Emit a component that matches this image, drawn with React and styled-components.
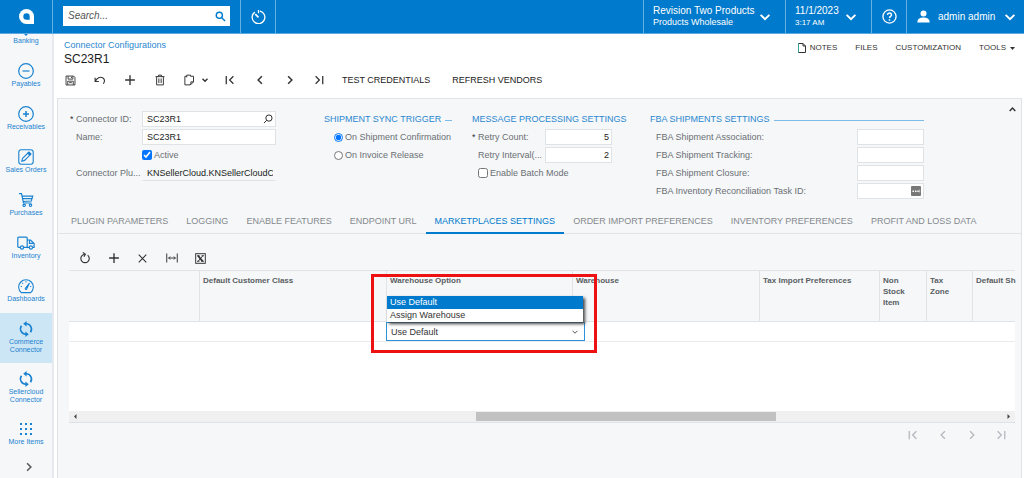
import React from "react";
import styled, { createGlobalStyle, css } from "styled-components";

const blue = "#007acc";
const panel = "#f5f7f9";
const line = "#e1e4e7";

const GlobalStyle = createGlobalStyle`
  *, *::before, *::after { box-sizing: border-box; }
  body { margin: 0; background: #fff; color: #333; font: 9px/12px "Liberation Sans", Arial, sans-serif; }
  button, input, select { font: inherit; color: inherit; margin: 0; }
  button { background: none; border: 0; padding: 0; cursor: pointer; }
  a { color: inherit; text-decoration: none; }
  svg { display: block; flex: none; }
  ul { list-style: none; margin: 0; padding: 0; }
`;

const Page = styled.div`
  min-height: 100vh;
  display: flex;
  flex-direction: column;
`;

/* ---------- top bar ---------- */
const TopBar = styled.header`
  display: flex;
  height: 34px;
  background: ${blue};
  border-bottom: 1px solid #5aa9e0;
  color: #fff;
`;
const LogoLink = styled.a`
  width: 53px;
  border-right: 1px solid #66b0e3;
  display: flex;
  align-items: center;
  justify-content: center;
`;
const SearchBox = styled.form`
  display: flex;
  align-items: center;
  width: 167px;
  height: 20px;
  margin: 6px 10px;
  padding: 0 4px 0 5px;
  background: #fff;
  color: ${blue};
`;
const SearchInput = styled.input`
  flex: 1;
  min-width: 0;
  border: 0;
  padding: 0;
  outline: 0;
  background: transparent;
  font-size: 10px;
  font-style: italic;
  color: #444;
  &::placeholder { color: #555; opacity: 1; }
`;
const BarButton = styled.button`
  display: flex;
  align-items: center;
  justify-content: ${(p) => (p.$spread ? "space-between" : "center")};
  width: ${(p) => p.$w}px;
  padding: ${(p) => (p.$spread ? "0 13px 0 9px" : "0")};
  border-left: 1px solid #66b0e3;
  border-right: ${(p) => (p.$closed ? "1px solid #66b0e3" : "0")};
  font-size: 10px;
  text-align: left;
  white-space: nowrap;
`;
const UserButton = styled(BarButton)`
  padding: 0 7px 0 10px;
  gap: 8px;
  justify-content: flex-start;
  svg:last-child { margin-left: auto; }
`;
const Grow = styled.span`
  flex: 1;
`;
const TwoLines = styled.span`
  display: flex;
  flex-direction: column;
  line-height: 12px;
  small { font-size: ${(p) => (p.$small ? 8 : 9)}px; line-height: 11px; }
`;

/* ---------- side navigation ---------- */
const Body = styled.div`
  flex: 1;
  display: flex;
`;
const SideNav = styled.nav`
  flex: none;
  width: 54px;
  display: flex;
  flex-direction: column;
  background: ${panel};
  border-right: 2px solid #e6e9ed;
  overflow: hidden;
  color: #1a82d0;
`;
const NavList = styled.ul`
  margin-top: -22px;
  flex: 1;
`;
const NavItem = styled.a`
  display: flex;
  flex-direction: column;
  align-items: center;
  gap: 1px;
  min-height: 43px;
  padding: 8px 0 9px;
  background: ${(p) => (p.$active ? "#cde6f5" : "transparent")};
  font-size: 7px;
  line-height: 8px;
  text-align: center;
`;
const NavLabel = styled.span`
  max-width: 48px;
`;
const NavMore = styled.button`
  height: 22px;
  display: flex;
  align-items: center;
  justify-content: center;
  padding-left: 6px;
  color: #555;
`;

/* ---------- page head ---------- */
const Main = styled.main`
  flex: 1;
  min-width: 0;
  display: flex;
  flex-direction: column;
  padding: 0 2px 0 3px;
`;
const Head = styled.div`
  display: flex;
  justify-content: space-between;
  padding: 6px 7px 0;
`;
const Crumb = styled.a`
  display: block;
  line-height: 10px;
  color: #2b87cf;
`;
const Title = styled.h1`
  margin: 1px 0 0;
  font-size: 12px;
  font-weight: 400;
  line-height: 16px;
  color: #1c1c1c;
`;
const HeadLinks = styled.div`
  display: flex;
  align-items: center;
  gap: 18px;
  height: 16px;
  font-size: 8px;
`;
const HeadButton = styled.button`
  display: flex;
  align-items: center;
  gap: 4px;
`;
const Toolbar = styled.div`
  display: flex;
  height: 26px;
  margin: 0 0 5px -2px;
`;
const IconButton = styled.button`
  width: ${(p) => p.$w || 30}px;
  display: flex;
  align-items: center;
  justify-content: center;
  gap: 6px;
  color: ${(p) => (p.$dim ? "#b4b8bc" : "#333")};
`;
const CopyButton = styled(IconButton)`
  padding-left: 1px;
`;
const TextButtons = styled.div`
  display: flex;
  gap: 22px;
  padding-left: 9px;
`;
const TextButton = styled.button`
  color: #222;
`;

/* ---------- panel ---------- */
const Panel = styled.section`
  flex: 1;
  display: flex;
  flex-direction: column;
  background: ${panel};
  border: 1px solid ${line};
  border-bottom: 0;
`;
const FormArea = styled.div`
  display: flex;
  align-items: flex-start;
`;
const Columns = styled.form`
  flex: 1;
  display: grid;
  grid-template-columns: 254px 148px 178px 274px;
  padding: 12px 0 10px 12px;
`;
const Collapse = styled.button`
  width: 18px;
  height: 20px;
  display: flex;
  align-items: center;
  justify-content: center;
`;
const Column = styled.div`
  display: flex;
  flex-direction: column;
  gap: 2px;
  color: #6b6f73;
  white-space: nowrap;
`;
const Heading = styled.h2`
  display: flex;
  align-items: center;
  gap: 4px;
  width: ${(p) => (p.$w ? `${p.$w}px` : "auto")};
  height: 16px;
  margin: 0;
  font-size: 9px;
  font-weight: 400;
  color: #2b87cf;
  ${(p) =>
    p.$rule &&
    css`
      &::after { content: ""; flex: 1; height: 1px; margin-top: 2px; background: #7dbbe8; }
    `}
`;
const FieldRow = styled.div`
  display: flex;
  align-items: center;
  height: 16px;
`;
const Mark = styled.span`
  width: 6px;
  color: #333;
`;
const FieldLabel = styled.label`
  width: ${(p) => p.$w}px;
`;
const InputBox = styled.span`
  display: flex;
  align-items: center;
  width: ${(p) => p.$w}px;
  height: 16px;
  padding: 0 2px 0 4px;
  border: 1px solid #dfe3e6;
  background: #fff;
  color: #222;
  ${(p) =>
    p.$flat &&
    css`
      background: transparent;
      border-color: transparent transparent #dfe3e6;
    `}
`;
const Field = styled.input`
  flex: 1;
  width: 100%;
  min-width: 0;
  padding: 0;
  border: 0;
  outline: 0;
  background: transparent;
  text-align: ${(p) => (p.$right ? "right" : "left")};
`;
const Choice = styled.label`
  display: flex;
  align-items: center;
  gap: 2px;
  height: 16px;
  padding-left: ${(p) => p.$indent}px;
  input { width: ${(p) => (p.$radio ? 9 : 10)}px; height: ${(p) => (p.$radio ? 9 : 10)}px; }
`;

/* ---------- tabs ---------- */
const Tabs = styled.div`
  display: flex;
  height: 25px;
  padding-left: 4px;
  border-bottom: 1px solid ${line};
`;
const Tab = styled.button`
  height: 25px;
  padding: 0 9px;
  white-space: nowrap;
  color: ${(p) => (p.$active ? blue : "#85898d")};
  border-bottom: 2px solid ${(p) => (p.$active ? blue : "transparent")};
`;
const GridTools = styled.div`
  display: flex;
  height: 24px;
  margin: 12px 0 0 12px;
`;

/* ---------- grid ---------- */
const GridBox = styled.div`
  flex: 1;
  display: flex;
  flex-direction: column;
  margin: 0 6px 0 11px;
  background: #fff;
  border-bottom: 1px solid #dfe2e5;
`;
const GridBody = styled.div`
  flex: 1;
`;
const Table = styled.table`
  width: 100%;
  table-layout: fixed;
  border-collapse: separate;
  border-spacing: 0;
`;
const Th = styled.th`
  height: 52px;
  padding: 4px 0 4px 3px;
  vertical-align: top;
  text-align: left;
  font-size: 8px;
  line-height: 11px;
  color: #5a5e62;
  background: ${panel};
  border-top: 1px solid ${line};
  border-bottom: 1px solid ${line};
  border-right: ${(p) => (p.$last ? "0" : `1px solid ${line}`)};
  white-space: pre;
`;
const Td = styled.td`
  height: 20px;
  padding: 0;
  border-bottom: 1px solid #e9ebed;
`;
const Editor = styled.div`
  position: relative;
  height: 19px;
  width: 199px;
  margin-left: -1px;
  display: flex;
  align-items: center;
  svg { position: absolute; right: 6px; pointer-events: none; color: #555; }
`;
const EditorSelect = styled.select`
  appearance: none;
  width: 100%;
  height: 100%;
  padding: 0 4px;
  border: 1px solid #2f91d8;
  border-radius: 0;
  outline: 0;
  background: #fff;
  color: #333;
`;
const Options = styled.ul`
  position: absolute;
  z-index: 2;
  left: 1px;
  bottom: 19px;
  width: 196px;
  background: #fff;
  box-shadow: 2px 2px 3px #444;
`;
const Option = styled.li`
  height: 13px;
  padding: 0 3px;
  line-height: 13px;
  background: ${(p) => (p.$active ? blue : "#fff")};
  color: ${(p) => (p.$active ? "#fff" : "#333")};
`;
const Highlight = styled.span`
  position: absolute;
  z-index: 3;
  left: -15px;
  top: -48px;
  width: 226px;
  height: 79px;
  border: 3px solid #ee1111;
  pointer-events: none;
`;
const ScrollTrack = styled.div`
  display: flex;
  align-items: center;
  height: 11px;
  padding: 0 4px;
  background: #f0f0f0;
  color: #444;
`;
const Space = styled.span`
  flex: ${(p) => p.$n} 1 0;
`;
const Thumb = styled.span`
  flex: 300 1 0;
  height: 9px;
  background: #c1c1c1;
`;
const Pager = styled.div`
  display: flex;
  justify-content: flex-end;
  height: 24px;
  margin: 0 6px 31px;
`;

/* ---------- icons ---------- */
const Svg = ({ s = 12, w = s, box = "0 0 16 16", sw = 1.3, children }) => (
  <svg width={w} height={s} viewBox={box} fill="none" stroke="currentColor" strokeWidth={sw} aria-hidden="true">
    {children}
  </svg>
);
const Chevron = ({ dir = "down", s = 14, sw = 2.2 }) => {
  const d = { down: "M3 5.5l5 5 5-5", up: "M3 10.5l5-5 5 5", left: "M10.5 3l-5 5 5 5", right: "M5.5 3l5 5-5 5" }[dir];
  return <Svg s={s} sw={sw}><path d={d} /></Svg>;
};
const First = () => <Svg s={12} sw={1.7}><path d="M3 2.5v11M12.5 3l-5 5 5 5" /></Svg>;
const Last = () => <Svg s={12} sw={1.7}><path d="M13 2.5v11M3.5 3l5 5-5 5" /></Svg>;
const Plus = () => <Svg s={12} sw={1.8}><path d="M8 1.5v13M1.5 8h13" /></Svg>;
const Triangle = ({ d, s = 5 }) => <svg width={s} height={s} viewBox="0 0 10 10" fill="currentColor" aria-hidden="true"><path d={d} /></svg>;

const Sync = () => (
  <Svg s={16} sw={1.6}>
    <path d="M8 2.700A5.400 5.400 0 0 1 12.500 11.200" />
    <path d="M8 13.300A5.400 5.400 0 0 1 3.500 4.800" />
    <path d="M8.600 0L5.200 2.700l3.400 2.700zM7.400 16l3.400-2.700-3.400-2.700z" fill="currentColor" stroke="none" />
  </Svg>
);
const navIcons = {
  bank: <Svg s={16}><path d="M2 10h12l-6 6z" fill="currentColor" stroke="none" /></Svg>,
  minus: <Svg s={16} sw={1.2}><circle cx="8" cy="8" r="7.300" /><path d="M4.500 8h7" /></Svg>,
  plus: <Svg s={16} sw={1.2}><circle cx="8" cy="8" r="7.300" /><path d="M5 8h6M8 5v6" strokeWidth="1.500" /></Svg>,
  pencil: (
    <Svg s={16} sw={1.1}>
      <rect x=".8" y=".8" width="14.400" height="14.400" rx="2.500" />
      <path d="M3.800 12.200l.8-2.800 5.800-5.800 2 2-5.800 5.800z" />
      <path d="M9.700 4.300l1.300-1.300 2 2-1.300 1.300z" fill="currentColor" />
    </Svg>
  ),
  cart: (
    <Svg s={16} sw={1.2}>
      <path d="M1 1.700h2.500l2 9.300h8M4 4.200h10.700L13.300 9 5.200 9.500M4.600 6.700h9" />
      <circle cx="6.200" cy="13.300" r="1.200" /><circle cx="12.500" cy="13.300" r="1.200" />
    </Svg>
  ),
  truck: (
    <Svg s={16} w={18} box="0 0 18 16" sw={1.2}>
      <path d="M3.300 12.300H1.600q-.8 0-.8-.8V3q0-.9.9-.9h7.600q.9 0 .9.900v9.300H6.600M10.200 5h3.300l3.600 3.500v3.800h-1.500M12.200 12.300h-2" />
      <path d="M12.500 5v3.300h4" />
      <circle cx="5" cy="12.500" r="1.600" /><circle cx="13.900" cy="12.500" r="1.600" />
    </Svg>
  ),
  gauge: (
    <Svg s={16} sw={1.1}>
      <path d="M3.300 14.600a7.300 7.300 0 1 1 9.400 0z" />
      <path d="M7.200 10.500l4.300-5.500-3 6.300q-1 .7-1.300-.8z" />
      <path d="M8 3.300v1.200M4.300 4.800l.8.8M2.800 8.500H4M13.200 8.500H12" />
    </Svg>
  ),
  sync: <Sync />,
  dots: (
    <Svg s={16}>
      <g fill="currentColor" stroke="none">
        {[2, 7, 12].map((y) => [2, 7, 12].map((x) => <rect key={`${x}-${y}`} x={x} y={y} width="2" height="2" />))}
      </g>
    </Svg>
  ),
};

const nav = [
  ["Banking", "bank"],
  ["Payables", "minus"],
  ["Receivables", "plus"],
  ["Sales Orders", "pencil"],
  ["Purchases", "cart"],
  ["Inventory", "truck"],
  ["Dashboards", "gauge"],
  ["Commerce Connector", "sync", true],
  ["Sellercloud Connector", "sync"],
  ["More Items", "dots"],
];

const tabs = [
  "PLUGIN PARAMETERS",
  "LOGGING",
  "ENABLE FEATURES",
  "ENDPOINT URL",
  "MARKETPLACES SETTINGS",
  "ORDER IMPORT PREFERENCES",
  "INVENTORY PREFERENCES",
  "PROFIT AND LOSS DATA",
];

const columns = [
  ["", 131],
  ["Default Customer Class", 187],
  ["Warehouse Option", 186],
  ["Warehouse", 187],
  ["Tax Import Preferences", 120],
  ["Non\nStock\nItem", 47],
  ["Tax\nZone", 46],
  ["Default Sh", null],
];

function TextField({ id, label, mark, labelWidth, width, value, right, flat, icon }) {
  return (
    <FieldRow>
      <Mark>{mark ? "*" : ""}</Mark>
      <FieldLabel htmlFor={id} $w={labelWidth}>{label}</FieldLabel>
      <InputBox $w={width} $flat={flat}>
        <Field id={id} defaultValue={value} $right={right} />
        {icon}
      </InputBox>
    </FieldRow>
  );
}

function Header() {
  return (
    <TopBar>
      <LogoLink href="#home" aria-label="Home">
        <svg width="15" height="15" viewBox="0 0 15 15" aria-hidden="true">
          <path d="M7.500 0A7.500 7.500 0 0 1 15 7.500V15H7.500a7.500 7.500 0 0 1 0-15z" fill="#fff" />
          <path d="M7.500 4.300A3.200 3.200 0 0 1 10.700 7.500v3.200H7.500a3.200 3.200 0 0 1 0-6.400z" fill={blue} />
        </svg>
      </LogoLink>
      <SearchBox>
        <SearchInput aria-label="Search" placeholder="Search..." />
        <button type="button" aria-label="Run search">
          <Svg s={11} sw={2}><circle cx="6.300" cy="6.300" r="4.500" /><path d="M9.700 9.700l5 5" /></Svg>
        </button>
      </SearchBox>
      <BarButton $w={36} $closed aria-label="History">
        <Svg s={15} sw={1.4}>
          <path d="M4 3.300A6.800 6.800 0 1 0 9.500 2.200" />
          <path d="M4.500 5.500L8 9" strokeWidth="1.700" /><path d="M8 1v3.500" />
        </Svg>
      </BarButton>
      <Grow />
      <BarButton $w={142} $spread>
        <TwoLines><span>Revision Two Products</span><small>Products Wholesale</small></TwoLines>
        <Chevron />
      </BarButton>
      <BarButton $w={86} $spread>
        <TwoLines $small><span>11/1/2023</span><small>3:17 AM</small></TwoLines>
        <Chevron />
      </BarButton>
      <BarButton $w={35} aria-label="Help">
        <Svg s={15} sw={1.4}>
          <circle cx="8" cy="8" r="7" />
          <path d="M5.800 6.300Q6 4.300 8 4.300t2.200 1.900Q10.200 7.200 9 8 8 8.600 8 9.700M8 11v1.500" strokeWidth="1.600" />
        </Svg>
      </BarButton>
      <UserButton $w={118}>
        <svg width="13" height="13" viewBox="0 0 13 13" fill="#fff" aria-hidden="true">
          <circle cx="6.500" cy="3.500" r="3" /><path d="M.3 12.500q0-5 6.200-5t6.200 5z" />
        </svg>
        <span>admin admin</span>
        <Chevron />
      </UserButton>
    </TopBar>
  );
}

function Sidebar() {
  return (
    <SideNav>
      <NavList>
        {nav.map(([label, icon, active]) => (
          <li key={label}>
            <NavItem href="#nav" $active={active}>
              {navIcons[icon]}
              <NavLabel>{label}</NavLabel>
            </NavItem>
          </li>
        ))}
      </NavList>
      <NavMore aria-label="Expand menu"><Chevron dir="right" s={12} sw={2} /></NavMore>
    </SideNav>
  );
}

function PageHead() {
  return (
    <>
      <Head>
        <div>
          <Crumb href="#configurations">Connector Configurations</Crumb>
          <Title>SC23R1</Title>
        </div>
        <HeadLinks>
          <HeadButton>
            <Svg s={10} w={8} box="0 0 8 10" sw={1}>
              <path d="M.5.5h4.500l2.500 2.500v6.500h-7z" /><path d="M5 .5V3h2.500" />
              <path d="M.5.5v9" stroke="#35a79c" />
            </Svg>
            NOTES
          </HeadButton>
          <HeadButton>FILES</HeadButton>
          <HeadButton>CUSTOMIZATION</HeadButton>
          <HeadButton>TOOLS <Triangle d="M0 2h10L5 8z" /></HeadButton>
        </HeadLinks>
      </Head>
      <Toolbar>
        <IconButton aria-label="Save">
          <Svg s={11} sw={1.3}>
            <path d="M1.500 1.500h11l2 2v11h-13z" /><path d="M4.500 1.500v4.500h7V1.500M4 14.500V9h8v5.500M6 11.200h4M9.500 2.500v2" />
          </Svg>
        </IconButton>
        <IconButton aria-label="Undo">
          <Svg s={12} sw={1.5}><path d="M1.500 5v5h5M1.800 9.700C4 5 8 3.200 11.500 5c3 1.700 3.300 5 .8 8" /></Svg>
        </IconButton>
        <IconButton aria-label="Add"><Plus /></IconButton>
        <IconButton aria-label="Delete">
          <Svg s={12} sw={1.3}><path d="M2 3.500h12M6 3.500v-2h4v2M3.500 3.500v11h9v-11M6.500 6v6M9.500 6v6" /></Svg>
        </IconButton>
        <CopyButton $w={40} aria-label="Copy">
          <Svg s={12} sw={1.3}>
            <path d="M5 3H2.500v11.500h7" /><path d="M5 4.500V1.500h5V3h4v7.500l-3.500 3.500H9M10.500 14v-3.500H14" />
          </Svg>
          <Chevron s={8} sw={2.8} />
        </CopyButton>
        <IconButton aria-label="First record"><First /></IconButton>
        <IconButton aria-label="Previous record"><Chevron dir="left" s={12} sw={2} /></IconButton>
        <IconButton $w={29} aria-label="Next record"><Chevron dir="right" s={12} sw={2} /></IconButton>
        <IconButton $w={29} aria-label="Last record"><Last /></IconButton>
        <TextButtons>
          <TextButton>TEST CREDENTIALS</TextButton>
          <TextButton>REFRESH VENDORS</TextButton>
        </TextButtons>
      </Toolbar>
    </>
  );
}

function SettingsForm() {
  return (
    <FormArea>
      <Columns>
        <Column>
          <TextField
            id="cid" mark label="Connector ID:" labelWidth={66} width={134} value="SC23R1"
            icon={<Svg s={10} sw={1.5}><circle cx="9.500" cy="6.500" r="5" /><path d="M6 10l-4.500 4.500" /></Svg>}
          />
          <TextField id="name" label="Name:" labelWidth={66} width={134} value="SC23R1" />
          <Choice $indent={72}><input type="checkbox" defaultChecked />Active</Choice>
          <TextField id="plugin" flat label="Connector Plu..." labelWidth={66} width={134} value="KNSellerCloud.KNSellerCloudConnector" />
        </Column>
        <Column>
          <Heading $rule $w={128}>SHIPMENT SYNC TRIGGER</Heading>
          <Choice $radio $indent={10}><input type="radio" name="trigger" defaultChecked />On Shipment Confirmation</Choice>
          <Choice $radio $indent={10}><input type="radio" name="trigger" />On Invoice Release</Choice>
        </Column>
        <Column>
          <Heading>MESSAGE PROCESSING SETTINGS</Heading>
          <TextField id="count" mark right label="Retry Count:" labelWidth={67} width={67} value="5" />
          <TextField id="interval" right label="Retry Interval(..." labelWidth={67} width={67} value="2" />
          <Choice $indent={6}><input type="checkbox" />Enable Batch Mode</Choice>
        </Column>
        <Column>
          <Heading $rule>FBA SHIPMENTS SETTINGS</Heading>
          <TextField id="assoc" label="FBA Shipment Association:" labelWidth={201} width={67} />
          <TextField id="track" label="FBA Shipment Tracking:" labelWidth={201} width={67} />
          <TextField id="closure" label="FBA Shipment Closure:" labelWidth={201} width={67} />
          <TextField
            id="task" label="FBA Inventory Reconciliation Task ID:" labelWidth={201} width={67}
            icon={
              <svg width="10" height="10" viewBox="0 0 10 10" aria-hidden="true">
                <rect width="10" height="10" rx="1" fill="#777" />
                <path d="M1.500 4.500h1.500v1.500H1.500zM4 4.500h1.500v1.500H4zM6.300 4.500h1.500v1.500H6.300zM8.500 3.500h.6v3h-.6z" fill="#fff" />
              </svg>
            }
          />
        </Column>
      </Columns>
      <Collapse aria-label="Collapse"><Chevron dir="up" s={9} sw={2.6} /></Collapse>
    </FormArea>
  );
}

function Marketplaces() {
  return (
    <>
      <GridTools>
        <IconButton $w={29} aria-label="Refresh">
          <Svg s={12} sw={1.5}>
            <path d="M11.500 4.200A5.600 5.600 0 1 1 4.600 4.200L7.500 3" />
            <path d="M5 .8l3.500 2-1.800 3.600" />
          </Svg>
        </IconButton>
        <IconButton $w={29} aria-label="Add row"><Plus /></IconButton>
        <IconButton $w={29} aria-label="Delete row"><Svg s={11} sw={1.6}><path d="M2.500 2.500l11 11M13.500 2.500l-11 11" /></Svg></IconButton>
        <IconButton $w={29} aria-label="Fit to screen">
          <Svg s={12} sw={1.3}>
            <path d="M1 2v12M15 2v12M3.500 8h9M5.500 6l-2 2 2 2M10.500 6l2 2-2 2" />
          </Svg>
        </IconButton>
        <IconButton $w={29} aria-label="Export to Excel">
          <Svg s={11} sw={1.4}>
            <rect x="1" y="1" width="14" height="14" /><path d="M4.500 4l6.500 8" strokeWidth="2.800" /><path d="M11.500 4l-7 8M3 4h3.500M9.500 4H13M3 12h3.500M9 12h4" />
          </Svg>
        </IconButton>
      </GridTools>
      <GridBox>
        <GridBody>
          <Table>
            <colgroup>
              {columns.map(([name, width]) => <col key={name} width={width || undefined} />)}
            </colgroup>
            <thead>
              <tr>{columns.map(([name], i) => <Th key={name} $last={i === columns.length - 1}>{name}</Th>)}</tr>
            </thead>
            <tbody>
              <tr>
                {columns.map(([name]) => (
                  <Td key={name}>
                    {name === "Warehouse Option" && (
                      <Editor>
                        <EditorSelect aria-label="Warehouse Option" defaultValue="Use Default">
                          <option>Use Default</option>
                          <option>Assign Warehouse</option>
                        </EditorSelect>
                        <Chevron s={8} sw={2} />
                        <Options role="listbox" aria-label="Warehouse options">
                          <Option role="option" aria-selected="true" $active>Use Default</Option>
                          <Option role="option" aria-selected="false">Assign Warehouse</Option>
                        </Options>
                        <Highlight />
                      </Editor>
                    )}
                  </Td>
                ))}
              </tr>
            </tbody>
          </Table>
        </GridBody>
        <ScrollTrack>
          <Triangle d="M7 0v10L2 5z" />
          <Space $n={398} /><Thumb /><Space $n={230} />
          <Triangle d="M3 0v10l5-5z" />
        </ScrollTrack>
      </GridBox>
      <Pager>
        <IconButton $dim aria-label="First page"><First /></IconButton>
        <IconButton $dim $w={29} aria-label="Previous page"><Chevron dir="left" s={12} sw={1.7} /></IconButton>
        <IconButton $dim $w={29} aria-label="Next page"><Chevron dir="right" s={12} sw={1.7} /></IconButton>
        <IconButton $dim $w={29} aria-label="Last page"><Last /></IconButton>
      </Pager>
    </>
  );
}

export default function App() {
  return (
    <Page>
      <GlobalStyle />
      <Header />
      <Body>
        <Sidebar />
        <Main>
          <PageHead />
          <Panel>
            <SettingsForm />
            <Tabs role="tablist">
              {tabs.map((name) => {
                const active = name === "MARKETPLACES SETTINGS";
                return <Tab key={name} role="tab" aria-selected={active} $active={active}>{name}</Tab>;
              })}
            </Tabs>
            <Marketplaces />
          </Panel>
        </Main>
      </Body>
    </Page>
  );
}
